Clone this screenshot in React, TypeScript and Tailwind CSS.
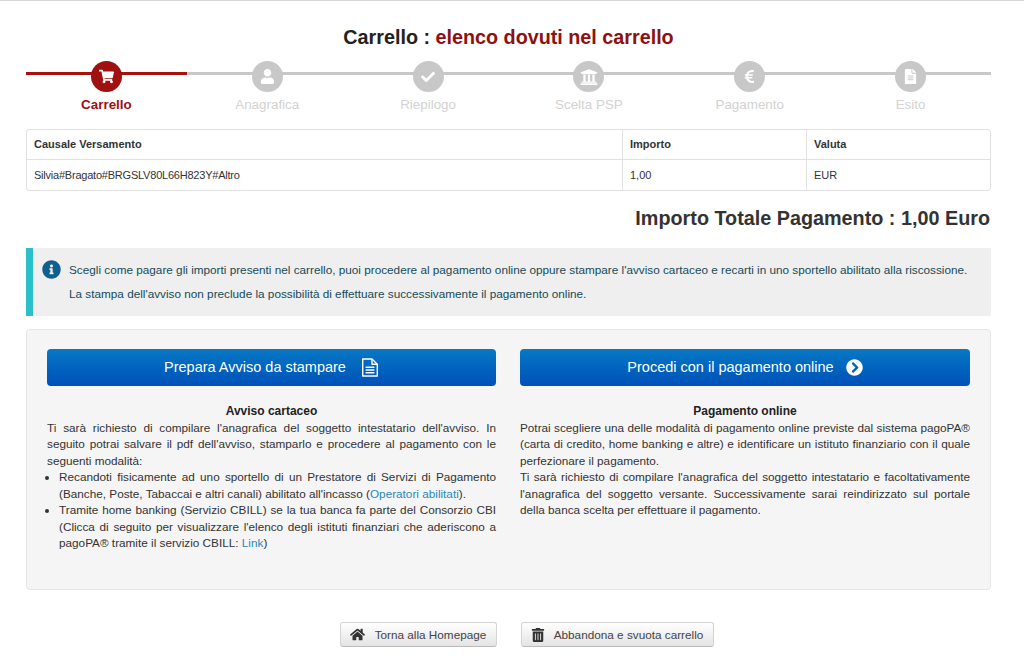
import React from "react";
import { FaShoppingCart, FaUser, FaCheck, FaUniversity, FaEuroSign, FaFileAlt, FaInfoCircle, FaChevronCircleRight, FaHome, FaTrashAlt } from "react-icons/fa";

const steps = [
  { label: "Carrello", Icon: FaShoppingCart, size: 15 },
  { label: "Anagrafica", Icon: FaUser, size: 15 },
  { label: "Riepilogo", Icon: FaCheck, size: 14 },
  { label: "Scelta PSP", Icon: FaUniversity, size: 18 },
  { label: "Pagamento", Icon: FaEuroSign, size: 15 },
  { label: "Esito", Icon: FaFileAlt, size: 15 },
];

function DocIcon() {
  return (
    <svg width="18" height="19" viewBox="0 0 18 19" fill="none" stroke="currentColor" strokeWidth="1.4" className="ml-[15px]">
      <path d="M1.7 1h9.3l5.3 5.3V18H1.7z" strokeLinejoin="round" />
      <path d="M11 1v5.3h5.3" strokeLinejoin="round" />
      <path d="M4.6 9.3h8.8M4.6 12h8.8M4.6 14.7h8.8" />
    </svg>
  );
}

export default function App() {
  return (
    <div className="h-[658px] overflow-hidden border-t border-[#d8d8d8] bg-white pl-[26px] pr-[33px] font-['Liberation_Sans',Arial,sans-serif] text-[11.75px] text-[#333]">
      <h1 className="mt-[25px] h-[23px] text-center text-[19.75px] font-bold leading-[23px] text-[#222]">
        Carrello : <span className="text-[#8f1010]">elenco dovuti nel carrello</span>
      </h1>

      <div className="mt-[12px] grid grid-cols-6">
        {steps.map((s, i) => (
          <div key={s.label} className="relative flex flex-col items-center">
            <div className={`absolute left-0 right-0 top-[11px] h-[3px] ${i === 0 ? "bg-[#a80f0f]" : "bg-[#c8c8c8]"}`} />
            <div className={`relative flex h-[31px] w-[31px] items-center justify-center rounded-full text-white ${i === 0 ? "bg-[#a01010]" : "bg-[#c8c8c8]"}`}>
              <s.Icon size={s.size} />
            </div>
            <div className={`mt-[5px] text-[13.4px] leading-[16px] ${i === 0 ? "font-bold text-[#a01010]" : "text-[#d2d2d2]"}`}>{s.label}</div>
          </div>
        ))}
      </div>

      <div className="mt-[16px] grid h-[62px] grid-cols-[596px_184px_1fr] grid-rows-2 rounded-[3px] border border-[#e2e2e2] text-[11px] leading-[29px]">
        <div className="border-r border-b border-[#e2e2e2] pl-[7px] font-bold">Causale Versamento</div>
        <div className="border-r border-b border-[#e2e2e2] pl-[7px] font-bold">Importo</div>
        <div className="border-b border-[#e2e2e2] pl-[7px] font-bold">Valuta</div>
        <div className="border-r border-[#e2e2e2] pl-[7px] leading-[30px] tracking-[-0.22px]">Silvia#Bragato#BRGSLV80L66H823Y#Altro</div>
        <div className="border-r border-[#e2e2e2] pl-[7px] leading-[30px]">1,00</div>
        <div className="pl-[7px] leading-[30px]">EUR</div>
      </div>

      <div className="mt-[16px] h-[23px] pr-px text-right text-[19.8px] font-bold leading-[23px]">Importo Totale Pagamento : 1,00 Euro</div>

      <div className="mt-[18px] flex h-[68px] border-l-[7px] border-[#2bbfcc] bg-[#efefef] pl-[9px]">
        <FaInfoCircle size={19} className="mt-[12px] shrink-0 text-[#10608f]" />
        <div className="ml-[8px] pt-[10px] leading-[24px] text-[#164a58]">
          <p>Scegli come pagare gli importi presenti nel carrello, puoi procedere al pagamento online oppure stampare l'avviso cartaceo e recarti in uno sportello abilitato alla riscossione.</p>
          <p>La stampa dell'avviso non preclude la possibilità di effettuare successivamente il pagamento online.</p>
        </div>
      </div>

      <div className="mt-[13px] grid h-[261px] grid-cols-[449px_450px] gap-x-[24px] rounded-[4px] border border-[#e6e6e6] bg-[#f5f5f5] pl-[20px] pt-[19px] leading-[16.5px]">
        <div>
          <button className="flex h-[37px] w-full items-center justify-center rounded-[4px] bg-gradient-to-b from-[#0a78c4] to-[#0050b8] text-[14.5px] text-white">
            Prepara Avviso da stampare
            <DocIcon />
          </button>
          <h3 className="mt-[17px] text-center text-[12px] font-bold text-[#222]">Avviso cartaceo</h3>
          <p className="text-justify">Ti sarà richiesto di compilare l'anagrafica del soggetto intestatario dell'avviso. In seguito potrai salvare il pdf dell'avviso, stamparlo e procedere al pagamento con le seguenti modalità:</p>
          <ul className="list-disc pl-[12px] text-justify">
            <li>Recandoti fisicamente ad uno sportello di un Prestatore di Servizi di Pagamento (Banche, Poste, Tabaccai e altri canali) abilitato all'incasso (<span className="text-[#2a88c0]">Operatori abilitati</span>).</li>
            <li>Tramite home banking (Servizio CBILL) se la tua banca fa parte del Consorzio CBI (Clicca di seguito per visualizzare l'elenco degli istituti finanziari che aderiscono a pagoPA® tramite il servizio CBILL: <span className="text-[#2a88c0]">Link</span>)</li>
          </ul>
        </div>
        <div>
          <button className="flex h-[37px] w-full items-center justify-center rounded-[4px] bg-gradient-to-b from-[#0a78c4] to-[#0050b8] text-[14.5px] text-white">
            Procedi con il pagamento online
            <FaChevronCircleRight size={17} className="ml-[12px]" />
          </button>
          <h3 className="mt-[17px] text-center text-[12px] font-bold text-[#222]">Pagamento online</h3>
          <p className="text-justify">Potrai scegliere una delle modalità di pagamento online previste dal sistema pagoPA® (carta di credito, home banking e altre) e identificare un istituto finanziario con il quale perfezionare il pagamento.<br />Ti sarà richiesto di compilare l'anagrafica del soggetto intestatario e facoltativamente l'anagrafica del soggetto versante. Successivamente sarai reindirizzato sul portale della banca scelta per effettuare il pagamento.</p>
        </div>
      </div>

      <div className="mt-[32px] flex justify-center gap-[24px] pl-[36px]">
        <button className="flex h-[25px] w-[157px] items-center justify-center rounded-[3px] border border-[#d4d4d4] border-b-[#bbb] bg-gradient-to-b from-white to-[#e4e4e4] text-[#444]">
          <FaHome size={15} className="mr-[10px] text-[#333]" />Torna alla Homepage
        </button>
        <button className="flex h-[25px] w-[193px] items-center justify-center rounded-[3px] border border-[#d4d4d4] border-b-[#bbb] bg-gradient-to-b from-white to-[#e4e4e4] text-[#444]">
          <FaTrashAlt size={14} className="mr-[9px] text-[#333]" />Abbandona e svuota carrello
        </button>
      </div>
    </div>
  );
}
